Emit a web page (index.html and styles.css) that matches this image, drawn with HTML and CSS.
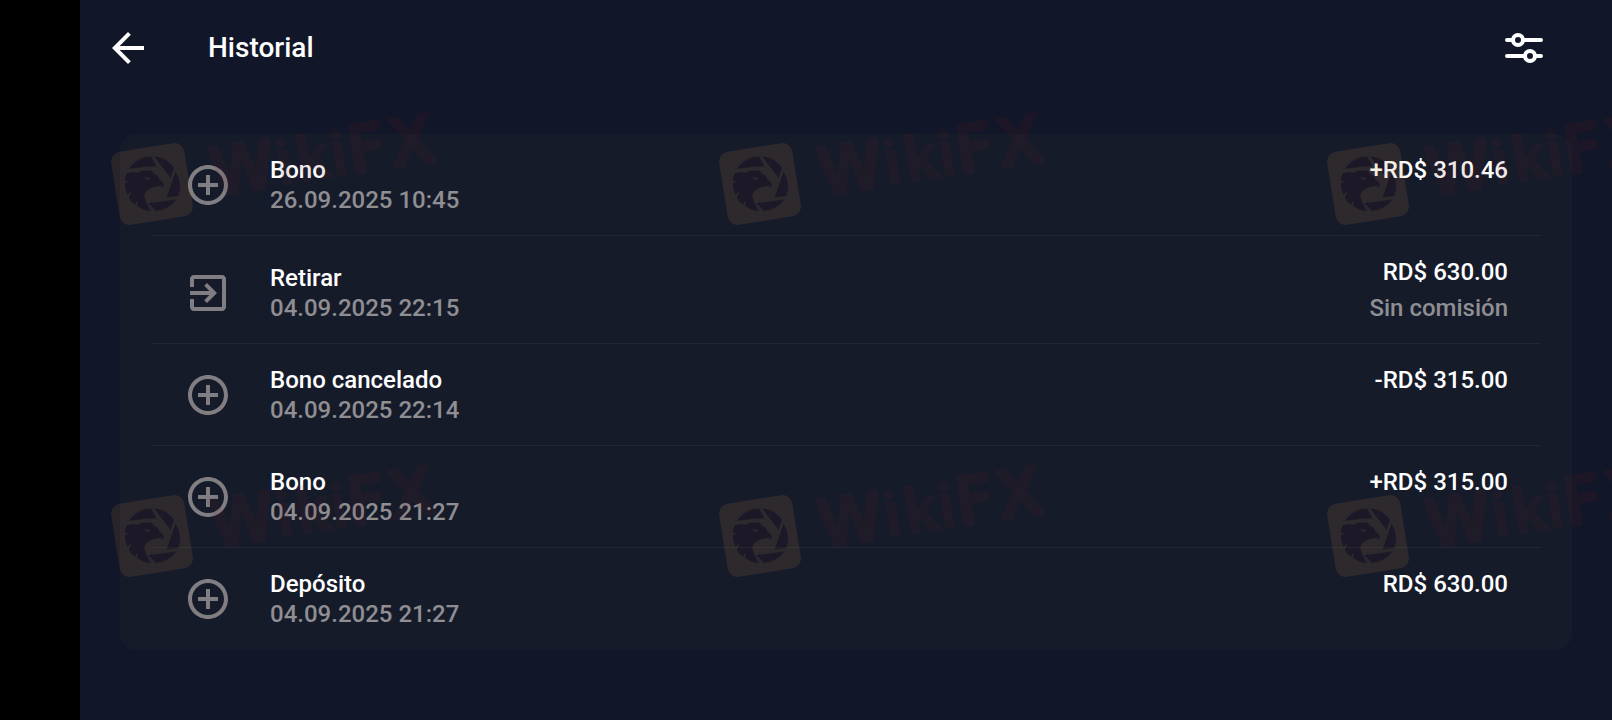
FILE: index.html
```html
<!DOCTYPE html>
<html lang="es">
<head>
    <meta charset="UTF-8">
    <meta name="viewport" content="width=device-width, initial-scale=1.0">
    <title>Historial</title>
    <link rel="stylesheet" href="styles.css">
</head>
<body>
    <!-- Icons used in the list -->
    <svg class="sprite" aria-hidden="true">
        <symbol id="icon-plus" viewBox="0 0 24 24">
            <path d="M13 7h-2v4H7v2h4v4h2v-4h4v-2h-4V7zm-1-5C6.48 2 2 6.48 2 12s4.48 10 10 10 10-4.48 10-10S17.52 2 12 2zm0 18c-4.41 0-8-3.59-8-8s3.59-8 8-8 8 3.59 8 8-3.59 8-8 8z"/>
        </symbol>
        <symbol id="icon-exit" viewBox="0 0 24 24">
            <path d="M10.09 15.59L11.5 17l5-5-5-5-1.41 1.41L12.67 11H3v2h9.67l-2.58 2.59zM19 3H5c-1.11 0-2 .9-2 2v4h2V5h14v14H5v-4H3v4c0 1.1.89 2 2 2h14c1.1 0 2-.9 2-2V5c0-1.1-.9-2-2-2z"/>
        </symbol>
    </svg>

    <div class="screen">
        <header class="topbar">
            <button type="button" class="icon-button" aria-label="Atrás">
                <svg class="icon" viewBox="0 0 24 24">
                    <path d="M20 11H7.83l5.59-5.59L12 4l-8 8 8 8 1.41-1.41L7.83 13H20v-2z"/>
                </svg>
            </button>
            <h1 class="title">Historial</h1>
            <button type="button" class="icon-button" aria-label="Filtros">
                <svg class="icon icon-filter" viewBox="0 0 48 48">
                    <path d="M7 16h6M23 16h18M7 32h18M35 32h6"/>
                    <circle cx="18" cy="16" r="5"/>
                    <circle cx="30" cy="32" r="5"/>
                </svg>
            </button>
        </header>

        <main>
            <ul class="history">
                <li class="row">
                    <svg class="icon row-icon"><use href="#icon-plus"/></svg>
                    <div class="info">
                        <p class="name">Bono</p>
                        <p class="muted">26.09.2025 10:45</p>
                    </div>
                    <div class="amount">
                        <p>+RD$ 310.46</p>
                    </div>
                </li>
                <li class="row">
                    <svg class="icon row-icon"><use href="#icon-exit"/></svg>
                    <div class="info">
                        <p class="name">Retirar</p>
                        <p class="muted">04.09.2025 22:15</p>
                    </div>
                    <div class="amount">
                        <p>RD$ 630.00</p>
                        <p class="muted">Sin comisión</p>
                    </div>
                </li>
                <li class="row">
                    <svg class="icon row-icon"><use href="#icon-plus"/></svg>
                    <div class="info">
                        <p class="name">Bono cancelado</p>
                        <p class="muted">04.09.2025 22:14</p>
                    </div>
                    <div class="amount">
                        <p>-RD$ 315.00</p>
                    </div>
                </li>
                <li class="row">
                    <svg class="icon row-icon"><use href="#icon-plus"/></svg>
                    <div class="info">
                        <p class="name">Bono</p>
                        <p class="muted">04.09.2025 21:27</p>
                    </div>
                    <div class="amount">
                        <p>+RD$ 315.00</p>
                    </div>
                </li>
                <li class="row">
                    <svg class="icon row-icon"><use href="#icon-plus"/></svg>
                    <div class="info">
                        <p class="name">Depósito</p>
                        <p class="muted">04.09.2025 21:27</p>
                    </div>
                    <div class="amount">
                        <p>RD$ 630.00</p>
                    </div>
                </li>
            </ul>
        </main>
    </div>

    <!-- Repeating watermark over the whole page -->
    <svg class="watermark" aria-hidden="true">
        <defs>
            <g id="eagle" transform="translate(48 80) scale(.3333) translate(-151 -253)">
                <path d="M82 208A83 83 0 0 1 148 170L165 200Q122 200 82 208z"/>
                <path d="M157 170A83 83 0 0 1 217 204L207 235z"/>
                <path d="M222 216A83 83 0 0 1 231 288L194 294z"/>
                <path d="M225 299A83 83 0 0 1 161 334L141 311z"/>
                <path fill-rule="evenodd" d="M75 221Q98 216 104 219Q128 208 152 214L156 222Q172 227 174 240Q187 245 187 263Q176 255 160 262Q134 266 128 286Q127 302 149 334Q124 334 108 320L106 302L100 316Q88 307 82 295L90 272L78 286Q70 270 69 252L86 240L69 246Q70 232 75 221zM124 233L146 234Q142 242 134 239z"/>
            </g>
            <mask id="logo-mask">
                <rect width="100" height="140" fill="#fff"/>
                <use href="#eagle" fill="#000"/>
            </mask>
            <pattern id="wiki" x="104" y="104" width="608" height="352" patternUnits="userSpaceOnUse">
                <g mask="url(#logo-mask)">
                    <rect class="wm-logo" x="11" y="43" width="74" height="74" rx="10" transform="rotate(-9 48 80)"/>
                </g>
                <use class="wm-ink" href="#eagle"/>
                <text class="wm-text" transform="translate(48 80) rotate(-9)" y="21"><tspan x="60">W</tspan><tspan class="wm-narrow" x="126 147 181">iki</tspan><tspan x="199 241">FX</tspan></text>
            </pattern>
        </defs>
        <rect width="100%" height="100%" fill="url(#wiki)"/>
    </svg>
</body>
</html>
```
FILE: styles.css
```css
* {
    box-sizing: border-box;
}

body {
    margin: 0;
    padding-left: 80px;
    background-color: #000;
    color: #fff;
    font-family: Roboto, "Liberation Sans", sans-serif;
    font-size: 24px;
    font-weight: 500;
    line-height: 30px;
}

h1,
p,
ul {
    margin: 0;
    padding: 0;
}

.sprite {
    display: none;
}

.screen {
    min-height: 100vh;
    background-color: #111628;
}

.topbar {
    display: flex;
    align-items: center;
    height: 96px;
    padding: 0 64px 0 24px;
}

.title {
    flex: 1;
    margin-left: 56px;
    font-size: 28px;
    font-weight: 500;
}

.icon-button {
    padding: 0;
    border: none;
    background: none;
    color: inherit;
    cursor: pointer;
}

.icon {
    display: block;
    width: 48px;
    height: 48px;
    fill: currentColor;
}

.icon-filter {
    fill: none;
    stroke: currentColor;
    stroke-width: 4;
    stroke-linecap: round;
}

.history {
    margin: 38px 40px 0;
    padding: 0 32px;
    border-radius: 16px;
    background-color: #161b2a;
    list-style: none;
}

.row {
    display: flex;
    align-items: flex-end;
    padding: 21px 32px 20px;
    border-bottom: 1px solid #222733;
}

.row:last-child {
    padding-bottom: 21px;
    border-bottom: none;
}

.row-icon {
    margin-bottom: 6px;
    color: #807e82;
}

.info {
    flex: 1;
    margin-left: 38px;
}

.muted {
    color: #8f8e92;
}

.amount {
    display: flex;
    flex-direction: column;
    gap: 6px;
    align-self: flex-start;
    text-align: right;
}

.watermark {
    position: fixed;
    top: 0;
    left: 0;
    width: 100%;
    height: 100%;
    pointer-events: none;
}

.wm-logo {
    fill: rgba(190, 130, 60, 0.14);
}

.wm-ink {
    fill: rgba(120, 0, 30, 0.08);
}

.wm-text {
    fill: #6e1420;
    stroke: #6e1420;
    stroke-width: 5;
    stroke-linejoin: round;
    stroke-linecap: round;
    opacity: 0.11;
    font-family: "DejaVu Sans", sans-serif;
    font-size: 64px;
    font-weight: 400;
}

.wm-narrow {
    stroke-width: 2;
    font-family: Roboto, sans-serif;
    font-size: 62px;
    font-weight: 500;
}
```
